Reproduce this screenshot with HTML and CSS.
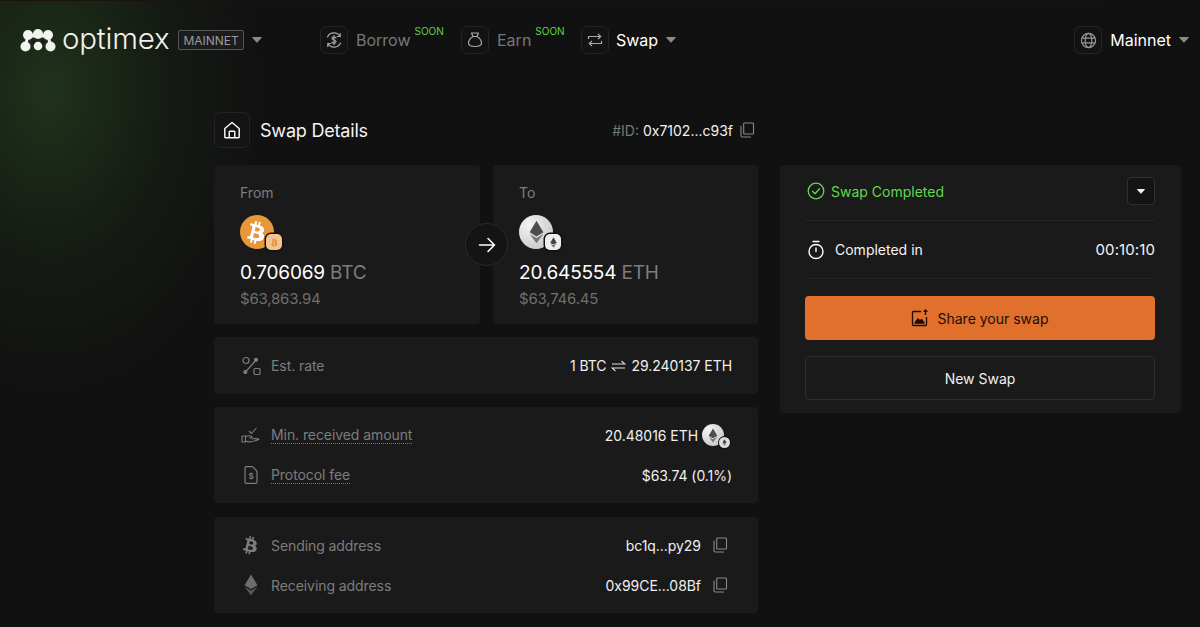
FILE: index.html
```html
<!DOCTYPE html>
<html lang="en">
<head>
<meta charset="utf-8">
<title>Optimex Swap Details</title>
<link rel="stylesheet" href="styles.css">
</head>
<body>
<svg class="defs" width="0" height="0" aria-hidden="true">
  <defs>
    <symbol id="copy" viewBox="0 0 16 16"><path d="M5.500 1h8.200c.4 0 .8.400.8.800v9.400c0 .4-.4.800-.8.800H5.500c-.4 0-.8-.4-.8-.8V1.800c0-.4.400-.8.800-.8z" fill="none" stroke="currentColor" stroke-width="1.100"/><path d="M2 4v9.800c0 .7.500 1.200 1.200 1.200h8.300" fill="none" stroke="currentColor" stroke-width="1.100" stroke-linecap="round"/></symbol>
    <symbol id="btc" viewBox="0 0 24 24"><path fill="currentColor" d="M17.600 10.400c.3-1.900-1.200-2.900-3.200-3.600l.7-2.600-1.600-.4-.6 2.500-1.300-.3.600-2.500-1.600-.4-.6 2.600-1-.3-2.200-.5-.4 1.700s1.200.3 1.200.3c.6.200.8.600.7 1l-1.800 7.100c-.1.200-.3.500-.7.400 0 0-1.200-.3-1.200-.3l-.8 1.800 2.100.5 1.100.3-.7 2.700 1.600.4.700-2.600 1.300.3-.6 2.600 1.600.4.700-2.600c2.800.5 4.900.3 5.800-2.200.7-2-.1-3.200-1.500-4 1-.2 1.800-.9 2-2.300zm-3.800 5.300c-.5 2-3.900.9-5 .6l.9-3.500c1.100.3 4.600.8 4.100 2.900zm.5-5.300c-.5 1.800-3.300.9-4.200.7l.8-3.200c.9.200 3.900.6 3.400 2.500z"/></symbol>
    <symbol id="eth" viewBox="0 0 24 38"><path fill="currentColor" opacity=".85" d="M12 1 1 19.500l11 6.500 11-6.500z"/><path fill="currentColor" opacity=".6" d="M1 22l11 15 11-15-11 6.500z"/></symbol>
    <symbol id="caret" viewBox="0 0 10 6"><path fill="currentColor" d="M.6 0h8.800c.4 0 .6.500.3.800L5.300 5.600c-.2.200-.5.200-.7 0L.3.800C0 .5.200 0 .6 0z"/></symbol>
  </defs>
</svg>

<header class="topbar">
  <div class="brand">
    <svg class="logo" width="36" height="23" viewBox="0 0 36 23" aria-hidden="true">
      <g fill="#f2f2ee">
        <path d="M8 6 5.500 17" stroke="#f2f2ee" stroke-width="3"/>
        <path d="M28 6l2.500 11" stroke="#f2f2ee" stroke-width="3"/>
        <path d="M8 7h20" stroke="#f2f2ee" stroke-width="3"/>
        <circle cx="8" cy="6" r="5"/><circle cx="18" cy="5" r="5"/><circle cx="28" cy="6" r="5"/>
        <circle cx="5.500" cy="17.500" r="5"/><circle cx="18" cy="17" r="4.300"/><circle cx="30.500" cy="17.500" r="5"/>
      </g>
      <g fill="#161e14"><path d="M11 12.500 15 10.500l-1 5.500zM25 12.500 21 10.500l1 5.500z"/></g>
    </svg>
    <span class="wordmark">optimex</span>
    <span class="net-tag">MAINNET</span>
    <svg class="caret brand-caret"><use href="#caret"/></svg>
  </div>
  <nav class="nav">
    <div class="nav-item nav-borrow">
      <span class="icon-box"><svg width="20" height="20" viewBox="0 0 20 20" fill="none" stroke="currentColor" stroke-width="1.200" stroke-linecap="round"><path d="M3.500 7A7 7 0 0 1 16 6.500M16.500 13A7 7 0 0 1 4 13.500M16.200 3.500v3h-3M3.800 16.500v-3h3"/><path d="M12 8c-.3-.8-1-1.200-2-1.200-1.200 0-2 .6-2 1.500 0 2.200 4 1.200 4 3.400 0 .9-.8 1.500-2 1.500-1 0-1.700-.4-2-1.200M10 5.500v9"/></svg></span>
      <span class="nav-label muted">Borrow</span><span class="soon">SOON</span>
    </div>
    <div class="nav-item nav-earn">
      <span class="icon-box"><svg width="18" height="18" viewBox="0 0 18 18" fill="none" stroke="currentColor" stroke-width="1.200" stroke-linejoin="round"><path d="M5.500 2h7l-1.500 3.500H7z"/><path d="M7 5.500C4.500 7 2.500 9.500 2.500 12c0 2.500 2 3.500 6.500 3.500s6.500-1 6.500-3.500c0-2.500-2-5-4.500-6.500"/></svg></span>
      <span class="nav-label muted">Earn</span><span class="soon">SOON</span>
    </div>
    <div class="nav-item">
      <span class="icon-box"><svg width="18" height="18" viewBox="0 0 18 18" fill="none" stroke="currentColor" stroke-width="1.200"><path d="M2.500 8V5.500h12M12 3l2.700 2.500L12 8M15.500 10v2.500h-12M6 15l-2.700-2.500L6 10"/></svg></span>
      <span class="nav-label">Swap</span>
      <svg class="caret"><use href="#caret"/></svg>
    </div>
  </nav>
  <div class="network">
    <span class="icon-box"><svg width="17" height="17" viewBox="0 0 18 18" fill="none" stroke="#9a9a9a" stroke-width="1.200"><circle cx="9" cy="9" r="7.500"/><ellipse cx="9" cy="9" rx="3.500" ry="7.500"/><path d="M1.800 6.500h14.400M1.800 11.500h14.400"/></svg></span>
    <span class="nav-label">Mainnet</span>
    <svg class="caret"><use href="#caret"/></svg>
  </div>
</header>

<main class="page">
  <div class="title-row">
    <div class="title-left">
      <span class="icon-box home-box"><svg width="20" height="20" viewBox="0 0 20 20" fill="none" stroke="#fff" stroke-width="1.400" stroke-linejoin="round"><path d="M2.800 8.500 10 2.500l7.200 6V17a.8.800 0 0 1-.8.800H3.600a.8.800 0 0 1-.8-.8z"/><path d="M7.200 17.800V12a.8.800 0 0 1 .8-.8h4a.8.800 0 0 1 .8.800v5.800"/></svg></span>
      <h1>Swap Details</h1>
    </div>
    <div class="swap-id"><span class="muted">#ID:</span> <span>0x7102...c93f</span><svg class="copy"><use href="#copy"/></svg></div>
  </div>

  <div class="columns">
    <section class="left">
      <div class="pair">
        <article class="card token-card">
          <span class="card-label">From</span>
          <span class="coin coin-btc"><svg width="30" height="30"><use href="#btc"/></svg><span class="badge badge-btc"><svg width="11" height="11"><use href="#btc"/></svg></span></span>
          <div class="amount">0.706069 <span class="unit">BTC</span></div>
          <div class="usd">$63,863.94</div>
        </article>
        <article class="card token-card">
          <span class="card-label">To</span>
          <span class="coin coin-eth"><svg width="15" height="24"><use href="#eth"/></svg><span class="badge badge-eth"><svg width="7" height="11"><use href="#eth"/></svg></span></span>
          <div class="amount">20.645554 <span class="unit">ETH</span></div>
          <div class="usd">$63,746.45</div>
        </article>
        <span class="arrow-btn"><svg width="20" height="20" viewBox="0 0 20 20" fill="none" stroke="#fff" stroke-width="1.600" stroke-linecap="round" stroke-linejoin="round"><path d="M2.500 10h15M11 3.500l6.500 6.500-6.500 6.500"/></svg></span>
      </div>

      <div class="card rows single">
        <div class="row">
          <span class="row-label"><svg class="row-icon" width="20" height="20" viewBox="0 0 20 20" fill="none" stroke="currentColor" stroke-width="1.200"><circle cx="5" cy="4.500" r="3"/><rect x="13" y="12.500" width="6" height="6" rx="1"/><path d="M15 4 4.500 16"/><circle cx="15" cy="3.800" r="1.500" fill="currentColor"/><circle cx="4.300" cy="16" r="1.500" fill="currentColor"/></svg>Est. rate</span>
          <span class="row-value">1 BTC <svg class="swap-arrows" width="15" height="12" viewBox="0 0 15 12" fill="none" stroke="#ddd" stroke-width="1.100"><path d="M1 4h13L10.500 1M14 8H1l3.500 3"/></svg> 29.240137 ETH</span>
        </div>
      </div>

      <div class="card rows double">
        <div class="row">
          <span class="row-label"><svg class="row-icon" width="20" height="20" viewBox="0 0 20 20" fill="none" stroke="currentColor" stroke-width="1.100" stroke-linejoin="round"><path d="M1 11h3.500v6H1zM4.500 12c2-1.500 4-1.500 6-.5 1 .5 1 1.500-.5 1.500H8M4.500 16c4 1.500 6 1 13.500-1.500-1-1.500-3-1-7-.5"/><path d="M8 6l2.500 2.500L15.500 3"/></svg><span class="dotted">Min. received amount</span></span>
          <span class="row-value">20.48016 ETH <span class="coin-sm"><svg width="10" height="15"><use href="#eth"/></svg><span class="badge-sm"><svg width="5" height="7"><use href="#eth"/></svg></span></span></span>
        </div>
        <div class="row">
          <span class="row-label"><svg class="row-icon" width="20" height="20" viewBox="0 0 20 20" fill="none" stroke="currentColor" stroke-width="1.200" stroke-linejoin="round"><path d="M4 3a1.300 1.300 0 0 1 1.300-1.300h6.200L16 6.200V17a1.300 1.300 0 0 1-1.300 1.300H5.300A1.300 1.300 0 0 1 4 17z"/><text class="fee-glyph" x="10" y="14" text-anchor="middle">$</text></svg><span class="dotted">Protocol fee</span></span>
          <span class="row-value">$63.74 (0.1%)</span>
        </div>
      </div>

      <div class="card rows double last-card">
        <div class="row">
          <span class="row-label"><svg class="row-icon" width="20" height="20" viewBox="3 2 18 20"><use href="#btc" width="24" height="24"/></svg>Sending address</span>
          <span class="row-value">bc1q...py29<svg class="copy row-copy"><use href="#copy"/></svg></span>
        </div>
        <div class="row">
          <span class="row-label"><svg class="row-icon" width="20" height="24" viewBox="-5 -1 34 40"><use href="#eth" width="24" height="38"/></svg>Receiving address</span>
          <span class="row-value">0x99CE...08Bf<svg class="copy row-copy"><use href="#copy"/></svg></span>
        </div>
      </div>
    </section>

    <aside class="card status">
      <div class="status-head">
        <span class="status-ok"><svg width="18" height="18" viewBox="0 0 18 18" fill="none" stroke="#62d84e" stroke-width="1.300" stroke-linecap="round" stroke-linejoin="round"><circle cx="9" cy="9" r="7.800"/><path d="M5.500 9.300 8 11.700l4.500-5"/></svg>Swap Completed</span>
        <span class="mini-btn"><svg width="8" height="5"><use href="#caret"/></svg></span>
      </div>
      <div class="status-time">
        <span class="time-label"><svg width="18" height="20" viewBox="0 0 18 20" fill="none" stroke="#fff" stroke-width="1.400" stroke-linecap="round"><circle cx="9" cy="11.500" r="7"/><path d="M6 1.500h6M9 8v3.500"/></svg>Completed in</span>
        <span class="time-value">00:10:10</span>
      </div>
      <button class="btn btn-primary" type="button"><svg width="18" height="18" viewBox="0 0 18 18" fill="none" stroke="#1d0d04" stroke-width="1.300" stroke-linejoin="round"><path d="M10 2.500H2.500A1 1 0 0 0 1.500 3.500v12a1 1 0 0 0 1 1h12a1 1 0 0 0 1-1V8"/><path d="M14.500 6V1M12.700 2.800l1.800-1.800 1.800 1.800"/><path fill="#1d0d04" d="M4 14l3-4 2 2 1.500-1.500L13 14z"/></svg>Share your swap</button>
      <button class="btn btn-ghost" type="button">New Swap</button>
    </aside>
  </div>
</main>
</body>
</html>
```
FILE: styles.css
```css
* { box-sizing: border-box; }
html, body { margin: 0; height: 100%; }
body {
  width: 1200px;
  height: 627px;
  overflow: hidden;
  color: #f4f4f4;
  font-family: "Inter", "Liberation Sans", sans-serif;
  background:
    linear-gradient(90deg, #1a1410, #141210 60%, #111) top / 100% 1px no-repeat,
    radial-gradient(ellipse 210px 300px at 50px 90px, rgba(36, 58, 30, .8), rgba(24, 36, 22, .55) 55%, rgba(17, 17, 17, 0) 100%),
    #111111;
}
.defs { position: absolute; }
.topbar {
  height: 80px;
  display: flex;
  align-items: center;
  padding: 0 11px 0 20px;
}
.brand { display: flex; align-items: center; width: 300px; flex: none; }
.logo { flex: none; }
.wordmark {
  margin-left: 6px;
  font-size: 29.500px;
  font-weight: 300;
  letter-spacing: -.2px;
  line-height: 1;
  color: #f2f2ee;
  position: relative;
  top: -1px;
}
.net-tag {
  margin-left: 9px;
  height: 20px;
  padding: 0 4px;
  display: flex;
  align-items: center;
  border: 1px solid #555;
  border-radius: 2px;
  font-size: 12px;
  color: #9a9a9a;
  background: #1c1c1c;
}
.caret { width: 10px; height: 6px; color: #8a8a8a; flex: none; margin-left: 8px; }
.brand-caret { margin-left: 8px; }
.nav { display: flex; align-items: center; flex: 1; }
.nav-item { display: flex; align-items: center; position: relative; color: #fff; }
.nav-borrow { width: 141px; }
.nav-earn { width: 120px; }
.icon-box {
  width: 28px;
  height: 28px;
  flex: none;
  display: flex;
  align-items: center;
  justify-content: center;
  border: 1px solid #232323;
  border-radius: 6px;
  color: #a8a8a8;
  background: #131313;
}
.nav-label { margin-left: 7px; font-size: 16px; color: #fff; }
.nav-label.muted { color: #777; margin-left: 8px; }
.soon {
  font-size: 10px;
  line-height: 12px;
  color: #5fd34a;
  align-self: flex-start;
  margin: -1px 0 0 4px;
}
.network { display: flex; align-items: center; }
.network .nav-label { margin-left: 8px; }
.muted { color: #777; }

.page { padding: 32px 19px 0 214px; }
.title-row {
  width: 544px;
  height: 36px;
  display: flex;
  align-items: center;
  justify-content: space-between;
}
.title-left { display: flex; align-items: center; gap: 10px; }
.home-box { width: 36px; height: 36px; background: #141414; }
h1 { margin: 0; font-size: 18px; font-weight: 400; letter-spacing: -.2px; color: #f4f4f4; }
.swap-id {
  display: flex;
  align-items: center;
  gap: 4px;
  font-size: 14px;
  color: #f2f2f2;
  padding-right: 3px;
}
.copy { width: 16px; height: 16px; color: #8a8a8a; margin-left: 2px; flex: none; }

.columns { display: flex; gap: 22px; margin-top: 17px; align-items: flex-start; }
.left { width: 544px; display: flex; flex-direction: column; gap: 13px; flex: none; }
.last-card { margin-top: 1px; }
.card { background: #1a1a1a; border-radius: 4px; }
.pair { display: grid; grid-template-columns: 266px 265px; gap: 13px; position: relative; height: 159px; }
.token-card { padding: 19px 26px 0; display: flex; flex-direction: column; }
.card-label { font-size: 14px; line-height: 18px; color: #7d7d7d; }
.coin {
  width: 34px;
  height: 34px;
  margin-top: 13px;
  border-radius: 50%;
  display: flex;
  align-items: center;
  justify-content: center;
  position: relative;
}
.coin-btc { background: #e8963a; color: #fff; }
.coin-eth { background: radial-gradient(circle at 30% 30%, #f4f4f4, #bdbdbd); color: #333; }
.badge {
  position: absolute;
  right: -8px;
  bottom: -1px;
  width: 16px;
  height: 16px;
  border-radius: 5px;
  display: flex;
  align-items: center;
  justify-content: center;
  box-shadow: 0 0 0 1.500px #111;
}
.badge-btc { background: #f2c590; color: #e08c2c; }
.badge-eth { background: #eee; color: #222; }
.amount { margin-top: 12px; font-size: 19px; line-height: 24px; font-weight: 400; color: #fff; letter-spacing: -.2px; }
.unit { color: #7d7d7d; }
.usd { margin-top: 5px; font-size: 15px; line-height: 18px; color: #6f6f6f; letter-spacing: -.2px; }
.arrow-btn {
  position: absolute;
  left: 251px;
  top: 58px;
  width: 43px;
  height: 43px;
  border-radius: 50%;
  background: #141414;
  border: 1px solid #2a2a2a;
  display: flex;
  align-items: center;
  justify-content: center;
}

.rows { padding: 0 26px; display: flex; flex-direction: column; justify-content: center; }
.single { height: 57px; }
.double { height: 96px; gap: 0; }
.row { height: 40px; display: flex; align-items: center; justify-content: space-between; }
.row-label { display: flex; align-items: center; gap: 10px; font-size: 14px; letter-spacing: -.08px; color: #7d7d7d; }
.row-icon { flex: none; color: #7d7d7d; margin-left: 1px; }
.dotted { border-bottom: 1px dotted #777; line-height: 17px; }
.row-value { display: flex; align-items: center; gap: 4px; font-size: 14px; letter-spacing: -.05px; color: #f0f0f0; }
.swap-arrows { margin: 0 1px; }
.row-copy { width: 16px; height: 16px; margin: 0 4px 0 7px; }
.coin-sm {
  width: 22px;
  height: 22px;
  border-radius: 50%;
  position: relative;
  display: flex;
  align-items: center;
  justify-content: center;
  background: radial-gradient(circle at 30% 30%, #f4f4f4, #bdbdbd);
  color: #333;
  margin-right: 8px;
}
.badge-sm {
  position: absolute;
  right: -6px;
  bottom: -2px;
  width: 11px;
  height: 11px;
  border-radius: 50%;
  background: #ddd;
  color: #222;
  display: flex;
  align-items: center;
  justify-content: center;
  box-shadow: 0 0 0 1px #111;
}
.fee-glyph { font: 600 8px "Inter", sans-serif; fill: currentColor; stroke: none; }

.status { width: 401px; height: 248px; padding: 12px 26px 0 25px; display: flex; flex-direction: column; }
.status-head {
  height: 44px;
  display: flex;
  align-items: flex-start;
  justify-content: space-between;
  border-bottom: 1px solid #242424;
  flex: none;
}
.status-ok { display: flex; align-items: center; gap: 6px; height: 28px; font-size: 14px; color: #62d84e; margin-left: 2px; }
.mini-btn {
  width: 28px;
  height: 28px;
  border: 1px solid #303030;
  border-radius: 4px;
  display: flex;
  align-items: center;
  justify-content: center;
  background: #141414;
  color: #f0f0f0;
}
.status-time {
  height: 58px;
  display: flex;
  align-items: center;
  justify-content: space-between;
  border-bottom: 1px solid #242424;
  font-size: 14px;
  color: #f4f4f4;
  flex: none;
}
.time-value { font-size: 15px; letter-spacing: .1px; }
.time-label { display: flex; align-items: center; gap: 10px; margin-left: 2px; }
.btn {
  display: flex;
  align-items: center;
  justify-content: center;
  gap: 8px;
  width: 100%;
  height: 44px;
  border-radius: 4px;
  font: 400 14px "Inter", "Liberation Sans", sans-serif;
  flex: none;
}
.btn-primary { margin-top: 17px; background: #e0702b; border: 0; color: #1d0d04; }
.btn-ghost { margin-top: 16px; background: transparent; border: 1px solid #2e2e2e; color: #f0f0f0; }
```
